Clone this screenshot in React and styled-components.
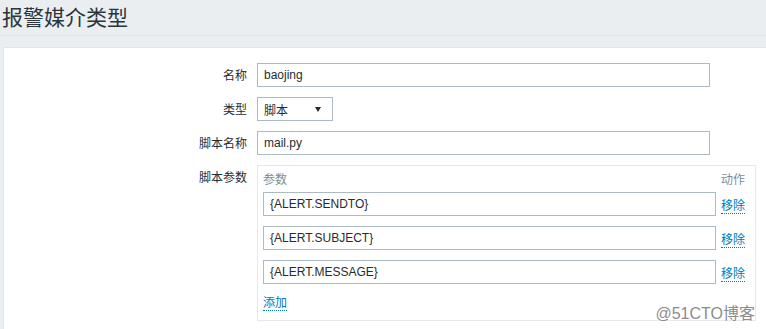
import React from 'react';
import styled, { createGlobalStyle } from 'styled-components';

const GlobalStyle = createGlobalStyle`
  html, body {
    margin: 0;
    padding: 0;
    overflow: hidden;
    background: #ebeef0;
  }
  body {
    font-family: "Liberation Sans", Arial, "Noto Sans CJK SC", sans-serif;
    font-size: 12px;
    color: #1f2c33;
  }
`;

const Page = styled.div`
  position: relative;
  height: 329px;
`;

const Header = styled.header`
  height: 36px;
  display: flex;
  align-items: center;
  padding: 0 0 4px 2px;
  box-sizing: border-box;
  border-bottom: 1px solid #dde2e5;
  & > h1 {
    margin: 0;
    font-family: "Noto Sans CJK SC", sans-serif;
    font-size: 21px;
    font-weight: 400;
    line-height: 28px;
    color: #2a363c;
  }
`;

const Panel = styled.section`
  margin: 11px 0 0 3px;
  background: #fff;
  border: 1px solid #dfe4e7;
  border-right: none;
  padding: 15px 0 20px;
`;

const Form = styled.div`
  display: grid;
  grid-template-columns: 243px 1fr;
  column-gap: 10px;
  row-gap: 10px;
  align-items: start;
`;

const Label = styled.label`
  text-align: right;
  line-height: 24px;
  font-family: "Noto Sans CJK SC", sans-serif;
  font-size: 12px;
  color: #1f2c33;
`;

const TextInput = styled.div`
  box-sizing: border-box;
  width: ${(p) => p.$width || 453}px;
  height: 24px;
  border: 1px solid #acbbc2;
  background: #fff;
  padding: 0 6px;
  line-height: 23px;
  font-size: 12px;
  color: #1f2c33;
  white-space: nowrap;
`;

const Select = styled.div`
  box-sizing: border-box;
  width: 76px;
  height: 24px;
  border: 1px solid #acbbc2;
  padding: 0 6px;
  display: flex;
  align-items: center;
  justify-content: space-between;
  font-family: "Noto Sans CJK SC", sans-serif;
  font-size: 12px;
  & > i {
    width: 0;
    height: 0;
    margin-right: 5px;
    border-left: 3px solid transparent;
    border-right: 3px solid transparent;
    border-top: 5px solid #1f2c33;
  }
`;

const ParamBox = styled.div`
  box-sizing: border-box;
  width: 499px;
  border: 1px solid #e6e9eb;
  padding: 5px 10px 10px 5px;
`;

const ParamGrid = styled.div`
  display: grid;
  grid-template-columns: 453px auto;
  column-gap: 5px;
  row-gap: 10px;
  align-items: center;
`;

const HeadCell = styled.div`
  font-family: "Noto Sans CJK SC", sans-serif;
  font-size: 12px;
  line-height: 16px;
  color: #768d99;
  margin-bottom: -5px;
`;

const ActionLink = styled.a`
  justify-self: start;
  font-family: "Noto Sans CJK SC", sans-serif;
  font-size: 12px;
  line-height: 16px;
  color: #0275b8;
  text-decoration: none;
  border-bottom: 1px dotted #0275b8;
  cursor: pointer;
  margin-top: ${(p) => p.$top || 0}px;
`;

const AddRow = styled.div`
  margin-top: 10px;
  line-height: 0;
`;

const Watermark = styled.div`
  position: absolute;
  right: 11px;
  top: 300px;
  font-family: "Liberation Sans", "Noto Sans CJK SC", sans-serif;
  font-size: 16px;
  color: #8c8c8c;
  text-shadow: 0 0 1px #fff;
`;

const params = ['{ALERT.SENDTO}', '{ALERT.SUBJECT}', '{ALERT.MESSAGE}'];

export default function App() {
  return (
    <Page>
      <GlobalStyle />
      <Header>
        <h1>报警媒介类型</h1>
      </Header>
      <Panel>
        <Form>
          <Label>名称</Label>
          <TextInput>baojing</TextInput>
          <Label>类型</Label>
          <Select>
            <span>脚本</span>
            <i />
          </Select>
          <Label>脚本名称</Label>
          <TextInput>mail.py</TextInput>
          <Label>脚本参数</Label>
          <ParamBox>
            <ParamGrid>
              <HeadCell>参数</HeadCell>
              <HeadCell>动作</HeadCell>
              {params.map((p) => (
                <React.Fragment key={p}>
                  <TextInput>{p}</TextInput>
                  <ActionLink $top={2}>移除</ActionLink>
                </React.Fragment>
              ))}
            </ParamGrid>
            <AddRow>
              <ActionLink>添加</ActionLink>
            </AddRow>
          </ParamBox>
        </Form>
      </Panel>
      <Watermark>@51CTO博客</Watermark>
    </Page>
  );
}
